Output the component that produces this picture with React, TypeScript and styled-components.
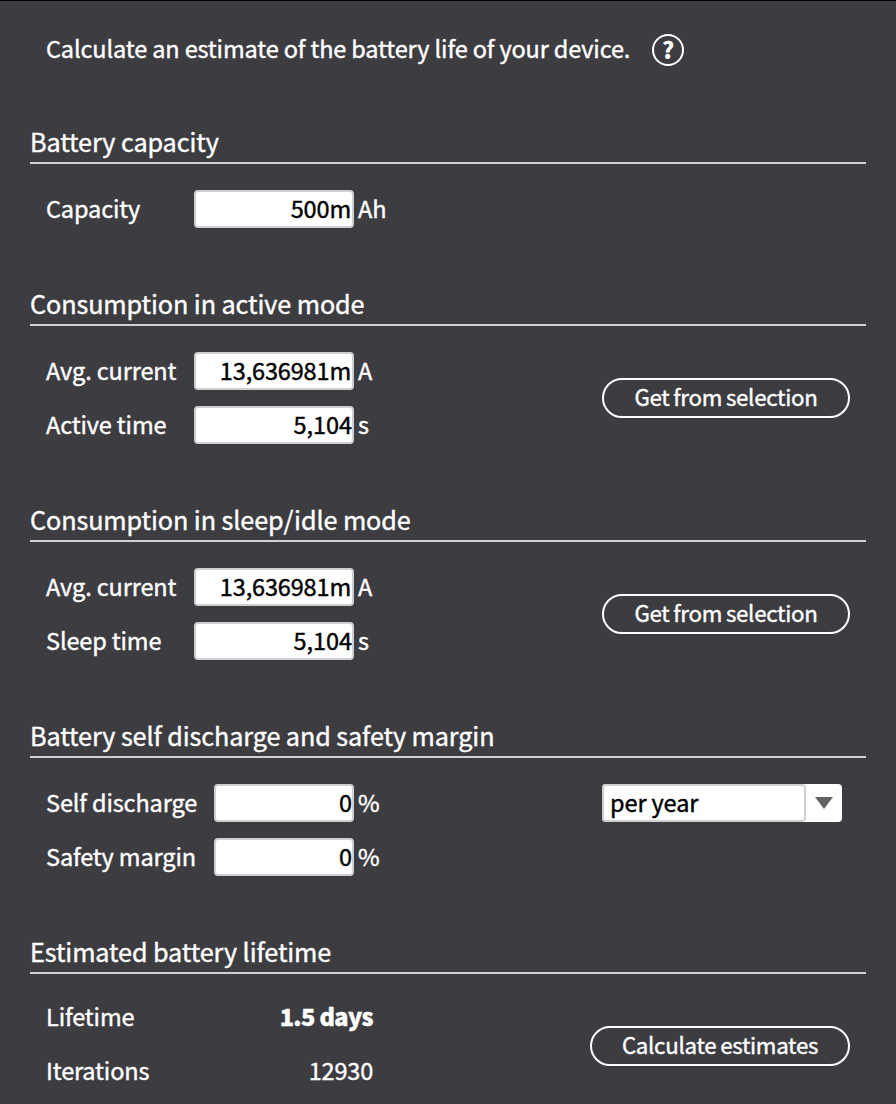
import React, { useState } from 'react';
import styled, { createGlobalStyle } from 'styled-components';

const GlobalStyle = createGlobalStyle`
  *, *::before, *::after { box-sizing: border-box; }
  body {
    margin: 0;
    background: #3c3c41;
    color: #fff;
    font-family: "Noto Sans CJK JP", "Noto Sans", sans-serif;
    font-size: 23.5px;
    line-height: 36px;
    letter-spacing: -0.13px;
    -webkit-text-stroke: 0.4px currentColor;
  }
`;

const Panel = styled.main`
  height: 1104px;
  overflow: hidden;
  border-top: 1px solid #000;
  padding: 33px 30px 0;
  white-space: nowrap;
`;

const Intro = styled.header`
  display: flex;
  align-items: center;
  height: 32px;
  padding-left: 16px;
  margin-bottom: 58px;
`;

const IntroText = styled.p`
  width: 606px;
  margin: 0;
  padding-bottom: 4px;
`;

const HelpButton = styled.button`
  width: 32px;
  height: 32px;
  padding: 0 0 2px;
  border: 2px solid #fff;
  border-radius: 50%;
  background: transparent;
  color: #fff;
  font: 900 23.5px/26px "Noto Sans CJK JP", sans-serif;
  -webkit-text-stroke: 0;
`;

const Section = styled.section`
  margin-bottom: 58px;
`;

const Title = styled.h2<{ $tight?: boolean }>`
  height: 40px;
  margin: 0 0 ${p => (p.$tight ? 24 : 26)}px;
  border-bottom: 2px solid #d1d1d3;
  font-size: 25.2px;
  font-weight: 400;
  line-height: 34px;
  letter-spacing: -0.09px;
`;

const SectionBody = styled.div`
  display: flex;
  justify-content: space-between;
  padding: 0 16px;
`;

const Rows = styled.div`
  display: grid;
  gap: 16px;
`;

const Row = styled.label`
  display: flex;
  align-items: center;
  height: 38px;
`;

const Name = styled.span<{ $wide?: boolean }>`
  width: ${p => (p.$wide ? 168 : 148)}px;
  padding-bottom: 2px;
`;

const Field = styled.input<{ $wide?: boolean; $prefixed?: boolean }>`
  width: ${p => (p.$wide ? 140 : 160)}px;
  height: 38px;
  padding: 0 ${p => (p.$prefixed ? 1 : 0)}px 2px 0;
  border: 2px solid #cfcfd1;
  border-radius: 4px;
  outline: 0;
  background: #fff;
  color: #000;
  font: inherit;
  letter-spacing: ${p => (p.$prefixed ? -0.15 : -0.05)}px;
  text-align: right;
`;

const Unit = styled.span`
  margin-left: 4px;
  padding-bottom: 2px;
`;

const Result = styled.output<{ $strong?: boolean }>`
  width: 179px;
  padding-bottom: 2px;
  text-align: right;
  font-weight: ${p => (p.$strong ? 900 : 400)};
  letter-spacing: ${p => (p.$strong ? -0.6 : -0.2)}px;
`;

const PillButton = styled.button<{ $width: number; $drop?: number }>`
  align-self: center;
  width: ${p => p.$width}px;
  height: 40px;
  margin-top: ${p => p.$drop ?? 0}px;
  padding: 0 0 4px;
  border: 2px solid #fff;
  border-radius: 20px;
  background: transparent;
  color: #fff;
  font: inherit;
  font-size: 22.3px;
  line-height: 32px;
  letter-spacing: -0.29px;
  word-spacing: -0.8px;
`;

const Select = styled.button`
  display: flex;
  width: 240px;
  height: 38px;
  margin-right: 8px;
  padding: 0;
  border: 0;
  border-radius: 4px;
  background: #fff;
  color: #000;
  font: inherit;
  letter-spacing: -0.1px;
`;

const SelectValue = styled.span`
  width: 204px;
  height: 38px;
  padding-left: 6px;
  border: 2px solid #cfcfd1;
  border-radius: 4px;
  line-height: 32px;
  text-align: left;
`;

const Arrow = styled.svg`
  width: 18px;
  height: 12px;
  margin: 13px 0 0 9px;
`;

type FieldRowProps = { name: string; initial: string; unit: string; wide?: boolean };

function FieldRow({ name, initial, unit, wide }: FieldRowProps) {
  const [value, setValue] = useState(initial);
  return (
    <Row>
      <Name $wide={wide}>{name}</Name>
      <Field
        $wide={wide}
        $prefixed={value.endsWith('m')}
        value={value}
        onChange={e => setValue(e.target.value)}
      />
      <Unit>{unit}</Unit>
    </Row>
  );
}

export default function App() {
  return (
    <>
      <GlobalStyle />
      <Panel>
        <Intro>
          <IntroText>Calculate an estimate of the battery life of your device.</IntroText>
          <HelpButton>?</HelpButton>
        </Intro>

        <Section>
          <Title>Battery capacity</Title>
          <SectionBody>
            <Rows>
              <FieldRow name="Capacity" initial="500m" unit="Ah" />
            </Rows>
          </SectionBody>
        </Section>

        <Section>
          <Title>Consumption in active mode</Title>
          <SectionBody>
            <Rows>
              <FieldRow name="Avg. current" initial="13,636981m" unit="A" />
              <FieldRow name="Active time" initial="5,104" unit="s" />
            </Rows>
            <PillButton $width={248}>Get from selection</PillButton>
          </SectionBody>
        </Section>

        <Section>
          <Title>Consumption in sleep/idle mode</Title>
          <SectionBody>
            <Rows>
              <FieldRow name="Avg. current" initial="13,636981m" unit="A" />
              <FieldRow name="Sleep time" initial="5,104" unit="s" />
            </Rows>
            <PillButton $width={248}>Get from selection</PillButton>
          </SectionBody>
        </Section>

        <Section>
          <Title>Battery self discharge and safety margin</Title>
          <SectionBody>
            <Rows>
              <FieldRow name="Self discharge" initial="0" unit="%" wide />
              <FieldRow name="Safety margin" initial="0" unit="%" wide />
            </Rows>
            <Select>
              <SelectValue>per year</SelectValue>
              <Arrow viewBox="0 0 18 12">
                <path d="M0 0h18L9 12z" fill="#636363" />
              </Arrow>
            </Select>
          </SectionBody>
        </Section>

        <Section>
          <Title $tight>Estimated battery lifetime</Title>
          <SectionBody>
            <Rows>
              <Row as="div">
                <Name>Lifetime</Name>
                <Result $strong>1.5 days</Result>
              </Row>
              <Row as="div">
                <Name>Iterations</Name>
                <Result>12930</Result>
              </Row>
            </Rows>
            <PillButton $width={260} $drop={4}>Calculate estimates</PillButton>
          </SectionBody>
        </Section>
      </Panel>
    </>
  );
}
